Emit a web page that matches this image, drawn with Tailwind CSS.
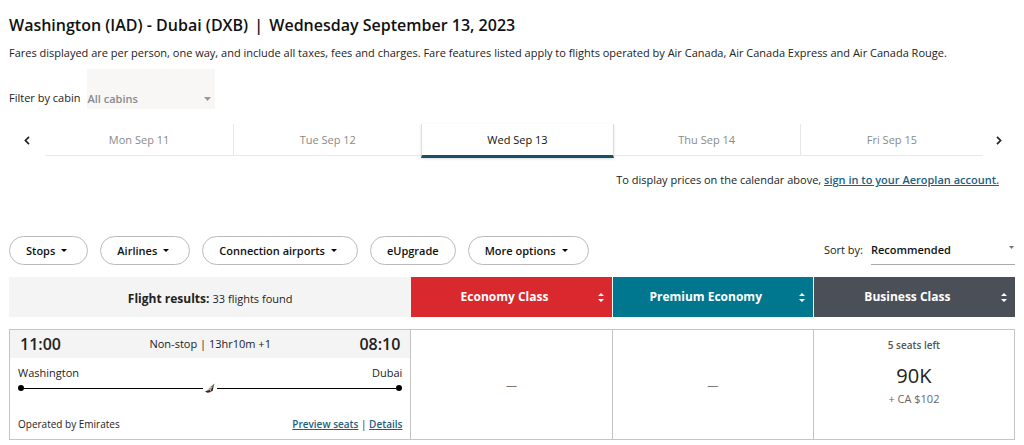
<!DOCTYPE html>
<html lang="en">
<head>
  <meta charset="utf-8" />
  <meta name="viewport" content="width=device-width, initial-scale=1" />
  <title>Flight results</title>
  <!-- Tailwind CSS -->
  <script src="https://cdn.jsdelivr.net/npm/@tailwindcss/browser@4"></script>
</head>
<body class="bg-white font-['Open_Sans',sans-serif] text-[11px] leading-4 text-[#222]">
  <div class="px-[9px] pt-[13px]">
    <!-- Heading -->
    <header>
      <h1 class="text-base leading-6 font-semibold text-[#111]">Washington (IAD) - Dubai (DXB) <span class="mx-[2px]">|</span> Wednesday September 13, 2023</h1>
      <p class="mt-2">Fares displayed are per person, one way, and include all taxes, fees and charges. Fare features listed apply to flights operated by Air Canada, Air Canada Express and Air Canada Rouge.</p>
    </header>

    <!-- Cabin filter -->
    <div class="mt-2 flex items-end gap-[7px]">
      <label for="cabin" class="pb-[3px]">Filter by cabin</label>
      <div class="relative w-32">
        <select id="cabin" class="block h-10 w-full appearance-none bg-[#f8f7f6] pt-5 font-semibold text-[#8a8a8a]">
          <option>All cabins</option>
        </select>
        <svg class="pointer-events-none absolute right-1 bottom-2 h-1 w-[7px]" viewBox="0 0 7 4" fill="#999"><path d="M0 0h7L3.5 4z" /></svg>
      </div>
    </div>

    <!-- Date tabs -->
    <nav class="mt-[15px] flex items-center">
      <button aria-label="Previous day" class="flex w-9 justify-center">
        <svg class="h-[9px] w-[6px]" viewBox="0 0 6 9" fill="none" stroke="#222" stroke-width="1.7"><path d="M5 .8 1.4 4.5 5 8.2" /></svg>
      </button>
      <div class="grid flex-1 grid-cols-[189fr_187fr_192fr_187fr_182fr] text-[#8a8a8a]">
        <button class="h-8 border-r border-b border-[#e8e8e8]">Mon Sep 11</button>
        <button class="h-8 border-b border-[#e8e8e8]">Tue Sep 12</button>
        <button class="-mb-[2px] border-x border-b-3 border-x-[#ddd] border-b-[#17506b] text-[#111] shadow-sm">Wed Sep 13</button>
        <button class="h-8 border-r border-b border-[#e8e8e8]">Thu Sep 14</button>
        <button class="h-8 border-b border-[#e8e8e8]">Fri Sep 15</button>
      </div>
      <button aria-label="Next day" class="flex w-8 justify-center">
        <svg class="h-[9px] w-[6px]" viewBox="0 0 6 9" fill="none" stroke="#222" stroke-width="1.7"><path d="M1 .8 4.6 4.5 1 8.2" /></svg>
      </button>
    </nav>
    <p class="mt-4 pr-4 text-right">To display prices on the calendar above, <a href="#" class="font-semibold text-[#23607f] underline">sign in to your Aeroplan account.</a></p>

    <!-- Filters and sorting -->
    <div class="mt-12 flex items-center justify-between">
      <div class="flex gap-3 font-semibold text-[#111]">
        <button class="flex h-[29px] items-center gap-[6px] rounded-full border border-[#bbb] pr-5 pl-4">Stops <svg class="h-[3px] w-[6px]" viewBox="0 0 6 3"><path d="M0 0h6L3 3z" /></svg></button>
        <button class="flex h-[29px] items-center gap-[6px] rounded-full border border-[#bbb] pr-5 pl-4">Airlines <svg class="h-[3px] w-[6px]" viewBox="0 0 6 3"><path d="M0 0h6L3 3z" /></svg></button>
        <button class="flex h-[29px] items-center gap-[6px] rounded-full border border-[#bbb] pr-5 pl-4">Connection airports <svg class="h-[3px] w-[6px]" viewBox="0 0 6 3"><path d="M0 0h6L3 3z" /></svg></button>
        <button class="flex h-[29px] items-center rounded-full border border-[#bbb] px-4">eUpgrade</button>
        <button class="flex h-[29px] items-center gap-[6px] rounded-full border border-[#bbb] pr-5 pl-4">More options <svg class="h-[3px] w-[6px]" viewBox="0 0 6 3"><path d="M0 0h6L3 3z" /></svg></button>
      </div>
      <div class="flex items-center gap-2">
        <label for="sort" class="pb-[2px]">Sort by:</label>
        <div class="relative w-36">
          <select id="sort" class="block h-[29px] w-full appearance-none border-b border-[#aaa] font-semibold text-[#111]">
            <option>Recommended</option>
          </select>
          <svg class="pointer-events-none absolute top-[10px] right-[1px] h-[3px] w-[5px]" viewBox="0 0 5 3" fill="#777"><path d="M0 0h5L2.5 3z" /></svg>
        </div>
      </div>
    </div>

    <!-- Results -->
    <table class="mt-3 w-full table-fixed border-separate border-spacing-0">
      <thead>
        <tr class="h-10 text-xs text-white">
          <th class="w-2/5 bg-[#f4f4f4] pt-1 font-bold text-[#222]">Flight results: <span class="text-[11px] font-normal">33 flights found</span></th>
          <th class="border-r border-white bg-[#d9292e]">
            <button class="flex w-full items-center pr-2"><span class="flex-1">Economy Class</span><svg class="h-[9px] w-[6px]" viewBox="0 0 6 9" fill="#fff"><path d="M3 0l3 3H0zM3 9L0 6h6z" /></svg></button>
          </th>
          <th class="border-r border-white bg-[#00778f]">
            <button class="flex w-full items-center pr-2"><span class="flex-1">Premium Economy</span><svg class="h-[9px] w-[6px]" viewBox="0 0 6 9" fill="#fff"><path d="M3 0l3 3H0zM3 9L0 6h6z" /></svg></button>
          </th>
          <th class="bg-[#4b4f58]">
            <button class="flex w-full items-center pr-2"><span class="flex-1">Business Class</span><svg class="h-[9px] w-[6px]" viewBox="0 0 6 9" fill="#fff"><path d="M3 0l3 3H0zM3 9L0 6h6z" /></svg></button>
          </th>
        </tr>
      </thead>
      <tbody class="before:block before:h-3 before:content-['']">
        <tr>
          <td class="border border-[#c4c4c4] p-0">
            <div class="flex h-7 items-center justify-between bg-[#f4f4f4] px-[10px]">
              <span class="text-base font-semibold">11:00</span>
              <span>Non-stop | 13hr10m +1</span>
              <span class="text-base font-semibold">08:10</span>
            </div>
            <div class="px-2 pt-[7px]">
              <div class="flex justify-between"><span>Washington</span><span>Dubai</span></div>
              <!-- Route line with the airline tail -->
              <div class="flex h-[14px] items-center">
                <span class="size-[6px] rounded-full bg-black"></span>
                <span class="h-px flex-1 bg-black"></span>
                <svg class="mx-[2px] h-[10px] w-[10px]" viewBox="0 0 10 10">
                  <path d="M0 9 5 4 9.500.5 7.500 8 3 9.500z" fill="#d8c4c0" />
                  <path d="M5.500 4 9.500.5 8.500 4z" fill="#4f7a5c" />
                  <path d="M0 8.500 4.500 7 6 9 2.500 9.700z" fill="#3a1f20" />
                  <path d="M4 5.500 6.500 4.500 5 7.500z" fill="#c77a76" />
                  <path d="M7 4.500 8.500 4 7.500 8 5.500 8.500z" fill="#222" />
                </svg>
                <span class="h-px flex-1 bg-black"></span>
                <span class="size-[6px] rounded-full bg-black"></span>
              </div>
              <div class="flex justify-between pt-[21px] pb-[7px] text-[10px]">
                <span>Operated by Emirates</span>
                <span><a href="#" class="font-semibold text-[#23607f] underline">Preview seats</a> | <a href="#" class="font-semibold text-[#23607f] underline">Details</a></span>
              </div>
            </div>
          </td>
          <td class="border-y border-r border-[#c4c4c4] text-center text-[#777]">—</td>
          <td class="border-y border-r border-[#c4c4c4] text-center text-[#777]">—</td>
          <td class="border-y border-r border-[#c4c4c4] p-0 pt-[7px] text-center align-top">
            <div class="text-[10px] font-semibold text-[#555]">5 seats left</div>
            <div class="mt-2 text-xl leading-[30px]">90K</div>
            <div class="text-[#666]">+ CA $102</div>
          </td>
        </tr>
      </tbody>
    </table>
  </div>
</body>
</html>
